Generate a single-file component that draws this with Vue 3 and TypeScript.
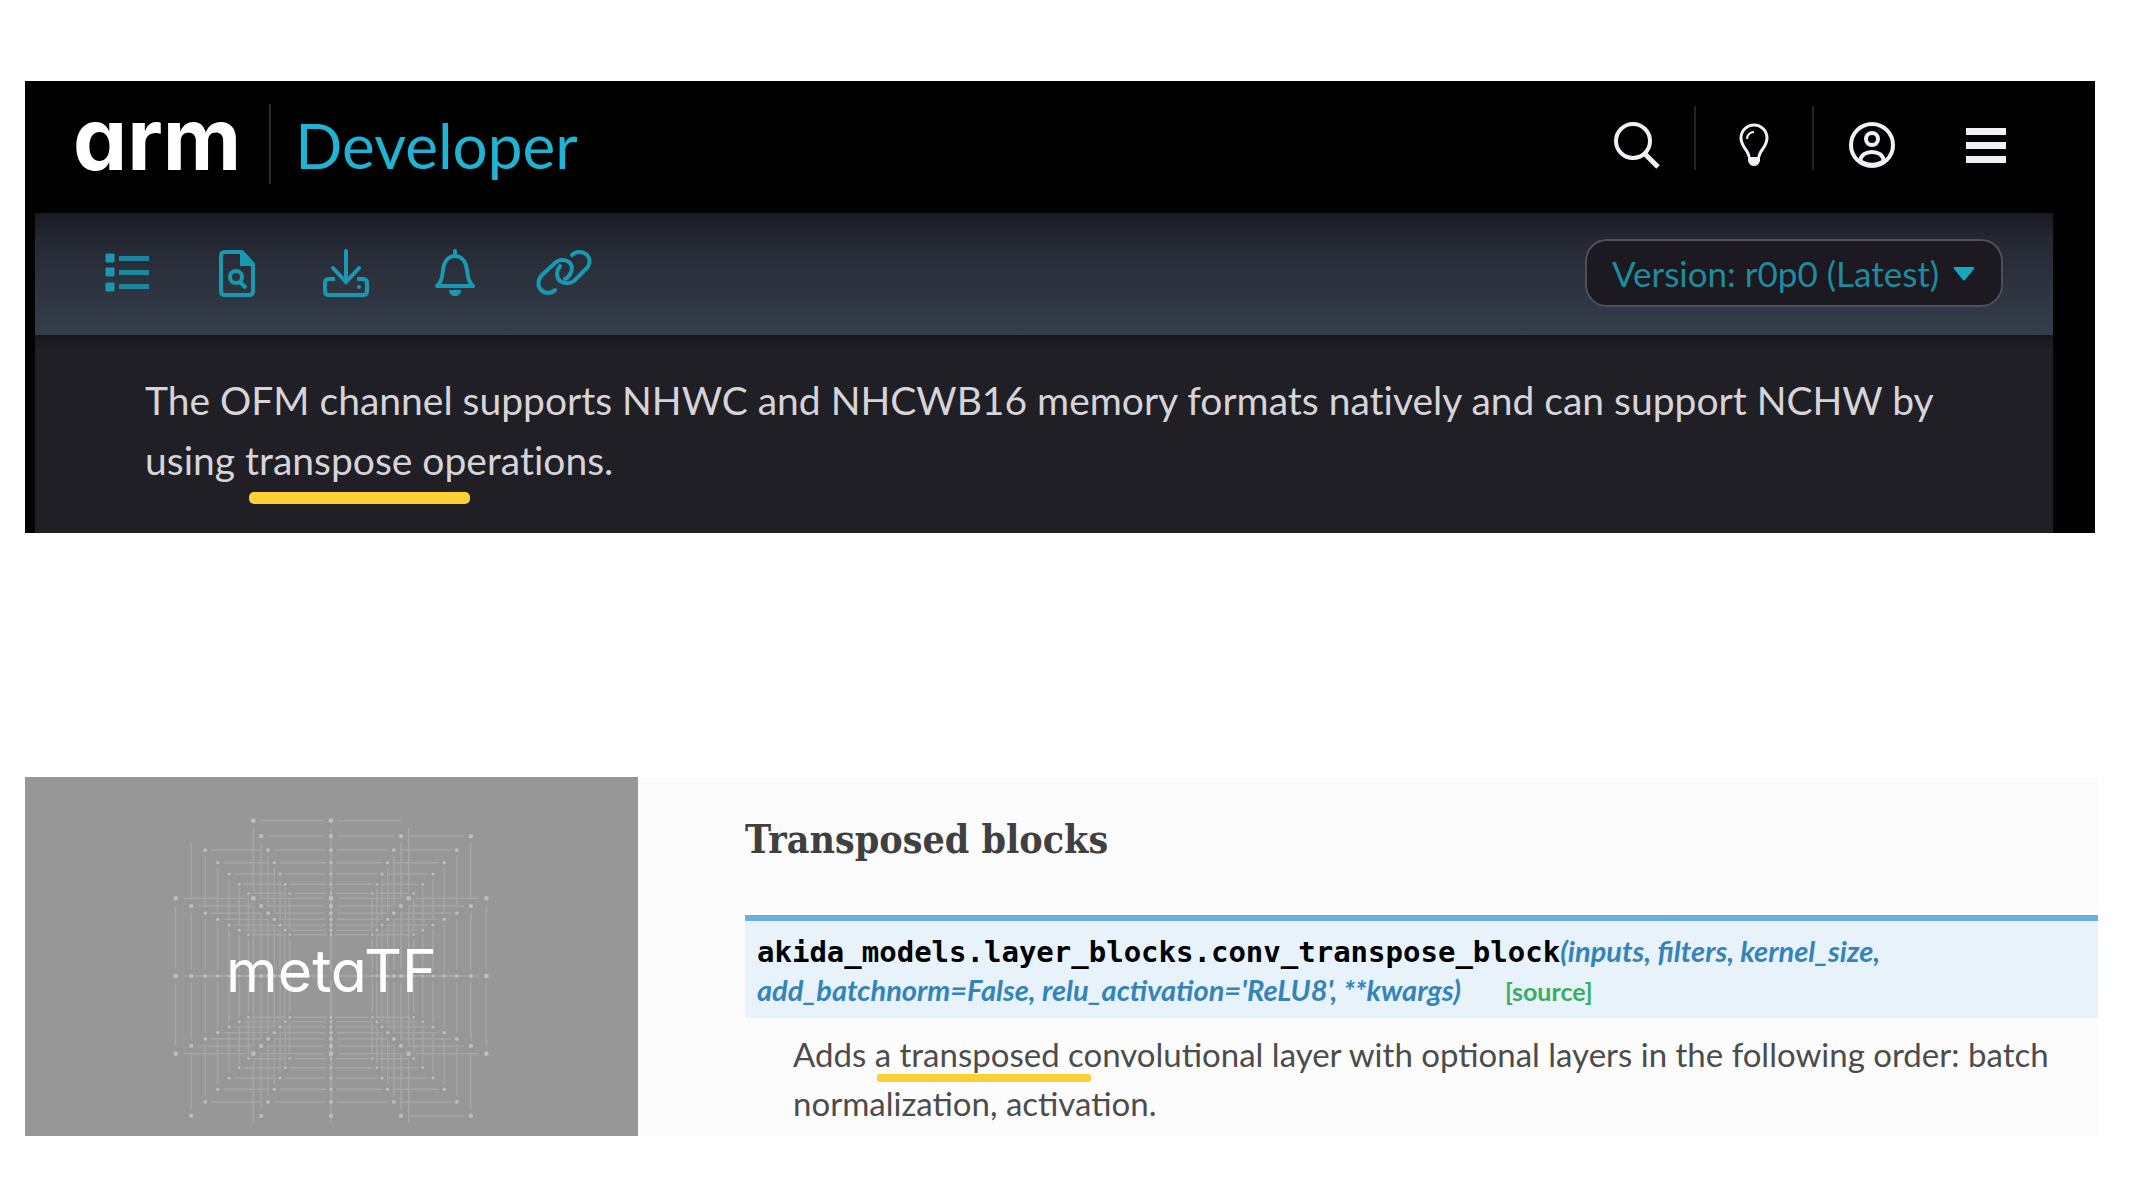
<script setup lang="ts">
interface Segment {
  x1: number
  y1: number
  x2: number
  y2: number
}

interface Dot {
  x: number
  y: number
  r: number
}

const segments: Segment[] = []
const dots: Dot[] = []

// Receding planes of a 5x5 lattice: each plane is 10% smaller than the one in front of it.
const LEVELS = 7
const STEP = 233
const GAP = 22
const FLOOR = 441

const hasDot = (level: number, i: number, j: number): boolean => {
  if (i === 0 && j === 0) return false
  if (level === 0) {
    if (Math.abs(i) === 2 && Math.abs(j) === 2) return false
    if (j === 2 || (j === -2 && i === 1)) return false
  }
  return !(level === 1 && i === -2 && j === -2)
}

const hasRow = (level: number, i: number, j: number): boolean => {
  if (level === 0) {
    if (j === 2) return false
    if (j === -2 && (i === -2 || i === 1)) return false
  }
  if (level === 1) {
    if (j === -2 && i === -2) return false
    if (j === 2 && i !== 1) return false
  }
  return true
}

const hasColumn = (level: number, i: number, j: number): boolean =>
  !(level === 0 && Math.abs(i) === 2 && (j === -2 || j === 1))

for (let level = 0; level < LEVELS; level++) {
  const scale = Math.pow(0.9, level)
  const step = STEP * scale
  const gap = GAP * scale
  for (let a = -2; a <= 2; a++) {
    for (let b = -2; b <= 2; b++) {
      if (hasDot(level, a, b)) dots.push({ x: a * step, y: b * step, r: 7 * scale })
      if (a < 2 && hasRow(level, a, b)) {
        segments.push({ x1: a * step + gap, y1: b * step, x2: (a + 1) * step - gap, y2: b * step })
      }
      if (b < 2 && hasColumn(level, a, b)) {
        segments.push({
          x1: a * step,
          y1: b * step + gap,
          x2: a * step,
          y2: Math.min((b + 1) * step - gap, FLOOR),
        })
      }
    }
  }
}
</script>

<template>
  <main class="page">
    <section class="arm">
      <header class="arm-header">
        <a class="brand" href="#">
          <span class="brand-arm">arm</span>
          <span class="brand-rule"></span>
          <span class="brand-dev">Developer</span>
        </a>
        <nav class="arm-nav">
          <button class="nav-button" type="button" aria-label="Search">
            <svg width="48" height="48" viewBox="0 0 48 48" fill="none" stroke="#f2f0f4" stroke-width="4">
              <circle cx="21" cy="20" r="17" />
              <path d="M32 32 46 46" stroke-width="5" />
            </svg>
          </button>
          <span class="nav-rule"></span>
          <button class="nav-button" type="button" aria-label="Tips">
            <svg width="48" height="48" viewBox="0 0 48 48" fill="none" stroke="#f2f0f4" stroke-width="3">
              <path d="M19 36c0-6-8-10-8-19a13 13 0 0 1 26 0c0 9-8 13-8 19" />
              <path d="M17 18c0-4 3-7 7-7" stroke-width="2" />
              <path d="M18 36h12v4c-1 3-3 5-6 5s-5-2-6-5z" fill="#f2f0f4" stroke="none" />
            </svg>
          </button>
          <span class="nav-rule"></span>
          <button class="nav-button" type="button" aria-label="Account">
            <svg width="48" height="48" viewBox="0 0 48 48" fill="none" stroke="#f2f0f4" stroke-width="4">
              <circle cx="24" cy="24" r="21" />
              <circle cx="24" cy="18" r="6" />
              <path d="M12 40c1-6 6-9 12-9s11 3 12 9c-7 5-17 5-24 0z" />
            </svg>
          </button>
          <button class="nav-button nav-menu" type="button" aria-label="Menu">
            <svg width="48" height="48" viewBox="0 0 48 48" fill="#f2f0f4">
              <path d="M4 7h40v7H4zM4 21h40v7H4zM4 35h40v7H4z" />
            </svg>
          </button>
        </nav>
      </header>

      <div class="toolbar">
        <div class="tools">
          <button class="tool" type="button" aria-label="Contents">
            <svg width="56" height="56" viewBox="0 0 56 56" fill="#1998b0">
              <path d="M6 9h8v8H6zM6 23h8v8H6zM6 38h8v8H6z" stroke="#1998b0" stroke-linejoin="round" />
              <path d="M19 11h30v5H19zM19 25h30v5H19zM19 39h30v5H19z" opacity="0.85" />
            </svg>
          </button>
          <button class="tool" type="button" aria-label="Search in document">
            <svg width="56" height="56" viewBox="0 0 56 56" fill="none" stroke="#1998b0" stroke-width="4">
              <path d="M16 7h17l11 12v27q0 4-4 4H16q-4 0-4-4V11q0-4 4-4z" stroke-linejoin="round" />
              <path d="M32 7v13h12z" fill="#1998b0" stroke-width="2" />
              <circle cx="27" cy="32" r="6" />
              <path d="M31 37l6 6" />
            </svg>
          </button>
          <button class="tool" type="button" aria-label="Download">
            <svg width="56" height="56" viewBox="0 0 56 56" fill="none" stroke="#1998b0" stroke-width="4">
              <path d="M28 6v30M15 23l13 14 13-14" stroke-linecap="round" />
              <path d="M17 34h-6q-4 0-4 4v8q0 4 4 4h34q4 0 4-4v-8q0-4-4-4h-6" />
              <circle cx="41" cy="42" r="1" stroke-width="2" />
            </svg>
          </button>
          <button class="tool" type="button" aria-label="Notifications">
            <svg width="56" height="56" viewBox="0 0 56 56" fill="none" stroke="#1998b0" stroke-width="4">
              <path d="M10 41c5-5 5-9 6-16 1-8 5-14 12-14s11 6 12 14c1 7 1 11 6 16z" stroke-linejoin="round" />
              <path d="M28 6v5" stroke-linecap="round" />
              <path d="M22 45h12c0 8-12 8-12 0z" fill="#1998b0" stroke="none" />
            </svg>
          </button>
          <button class="tool" type="button" aria-label="Copy link">
            <svg width="56" height="56" viewBox="0 0 56 56" fill="none" stroke="#1998b0" stroke-width="4" stroke-linecap="round">
              <path d="M24 21c-4 5-4 11 0 15 4 3 10 3 14 0l12-12c4-4 5-10 1-14s-11-4-15 0" />
              <path d="M29 34c6-3 9-11 5-16-4-4-11-4-15 0L6 30c-4 4-5 11-1 15s10 4 14 0" />
            </svg>
          </button>
        </div>
        <div class="version">
          <select class="version-select" aria-label="Version">
            <option>Version: r0p0 (Latest)</option>
          </select>
          <svg class="version-caret" width="24" height="16" viewBox="0 0 24 16" fill="#16a6c0">
            <path d="M3 2h18q2 0 1 2L13 15q-1 1-2 0L2 4q-1-2 1-2z" />
          </svg>
        </div>
      </div>

      <div class="arm-body">
        <p class="arm-text">
          The OFM channel supports NHWC and NHCWB16 memory formats natively and can support NCHW by using
          transpose operations.
        </p>
        <span class="stroke stroke-arm"></span>
      </div>
    </section>

    <section class="meta">
      <aside class="meta-side">
        <svg class="lattice" width="320" height="320" viewBox="-477 -480 960 960" aria-hidden="true">
          <line v-for="(s, n) in segments" :key="'s' + n" :x1="s.x1" :y1="s.y1" :x2="s.x2" :y2="s.y2" />
          <circle v-for="(d, n) in dots" :key="'d' + n" :cx="d.x" :cy="d.y" :r="d.r" />
        </svg>
        <span class="meta-name">metaTF</span>
      </aside>

      <article class="doc">
        <h2 class="doc-title">Transposed blocks</h2>
        <div class="signature">
          <code class="sig-name">akida_models.layer_blocks.conv_transpose_block</code><em class="sig-args">(inputs, filters, kernel_size,<br />add_batchnorm=False, relu_activation='ReLU8', **kwargs)</em>
          <a class="sig-source" href="#">[source]</a>
        </div>
        <div class="doc-body">
          <p class="doc-text">
            Adds a transposed convolutional layer with optional layers in the following order: batch
            normalization, activation.
          </p>
          <span class="stroke stroke-doc"></span>
        </div>
      </article>
    </section>
  </main>
</template>

<style>
body {
  margin: 0;
  background: #fff;
}
</style>

<style scoped>
.page {
  padding: 81px 44px 56px 25px;
  font-family: Lato, "Open Sans", sans-serif;
}

button {
  display: flex;
  margin: 0;
  padding: 0;
  border: 0;
  background: none;
  cursor: pointer;
}

.arm {
  margin-right: 3px;
  background: #000;
}

.arm-header {
  display: flex;
  align-items: center;
  justify-content: space-between;
  height: 132px;
  padding: 0 85px 4px 48px;
  box-sizing: border-box;
}

.brand {
  display: flex;
  align-items: center;
  text-decoration: none;
}

.brand-arm {
  padding-bottom: 12px;
  color: #fff;
  font: 700 86px/108px Inter, sans-serif;
  font-feature-settings: "cv11";
}

.brand-rule {
  width: 2px;
  height: 80px;
  margin: 0 24px 2px 28px;
  background: #2b2830;
}

.brand-dev {
  color: #1fb4d3;
  font-size: 62px;
  line-height: 76px;
}

.arm-nav {
  display: flex;
  align-items: center;
}

.nav-rule {
  width: 2px;
  height: 64px;
  margin: 0 34px 14px;
  background: #25222a;
}

.nav-menu {
  margin-left: 66px;
}

.toolbar {
  display: flex;
  align-items: center;
  justify-content: space-between;
  height: 122px;
  margin: 0 42px 0 10px;
  padding: 0 50px 2px 65px;
  box-sizing: border-box;
  background: linear-gradient(#191a22 0, #232732 20%, #2c323e 55%, #343d4b 100%);
}

.tools {
  display: flex;
  gap: 53px;
}

.version {
  display: flex;
  position: relative;
  align-items: center;
}

.version-select {
  width: 418px;
  height: 68px;
  padding: 0 25px;
  border: 2px solid #504e56;
  border-radius: 22px;
  background: #1c1920;
  color: #1e8b9e;
  font: 400 35px/44px Lato, "Open Sans", sans-serif;
  appearance: none;
}

.version-caret {
  position: absolute;
  right: 27px;
  pointer-events: none;
}

.arm-body {
  position: relative;
  margin: 0 42px 0 10px;
  padding: 35px 96px 43px 110px;
  background: linear-gradient(#1a171c 0, #201f25 16px);
}

.arm-text {
  margin: 0;
  color: #d6d4d9;
  font-size: 39px;
  line-height: 60px;
  font-variant-ligatures: none;
}

.stroke {
  position: absolute;
  background: #fdd033;
}

.stroke-arm {
  top: 157px;
  left: 214px;
  width: 221px;
  height: 12px;
  border-radius: 5px;
}

.stroke-doc {
  top: 56px;
  left: 132px;
  width: 214px;
  height: 8px;
  border-radius: 3px;
}

.meta {
  display: grid;
  grid-template-columns: minmax(0, 613fr) minmax(0, 1460fr);
  margin-top: 244px;
}

.meta-side {
  display: grid;
  place-items: center;
  padding-top: 39px;
  background: #979797;
}

.lattice,
.meta-name {
  grid-area: 1 / 1;
}

.lattice line {
  stroke: #a7a7a7;
  stroke-width: 4;
}

.lattice circle {
  fill: #bebebe;
}

.meta-name {
  padding-bottom: 10px;
  color: #fff;
  font: 400 59px/70px Inter, sans-serif;
  font-feature-settings: "cv11";
}

.doc {
  padding: 38px 0 0 107px;
  background: #fcfcfc;
}

.doc-title {
  margin: 0 0 52px;
  color: #404040;
  font: 700 39px/48px "Roboto Slab", "DejaVu Serif Condensed", "DejaVu Serif", serif;
}

.signature {
  padding: 11px 12px 8px;
  border-top: 6px solid #6ab0de;
  background: #e7f2fa;
  color: #3484bb;
  font-size: 29px;
  font-weight: 700;
  line-height: 37px;
}

.sig-name {
  color: #000;
  font: 700 29px/37px "DejaVu Sans Mono", monospace;
}

.sig-source {
  margin-left: 44px;
  color: #3bac62;
  font-size: 25px;
  text-decoration: none;
}

.doc-body {
  position: relative;
  padding: 12px 40px 0 48px;
}

.doc-text {
  margin: 0;
  color: #4c4c4c;
  font-size: 33px;
  line-height: 49px;
}
</style>
